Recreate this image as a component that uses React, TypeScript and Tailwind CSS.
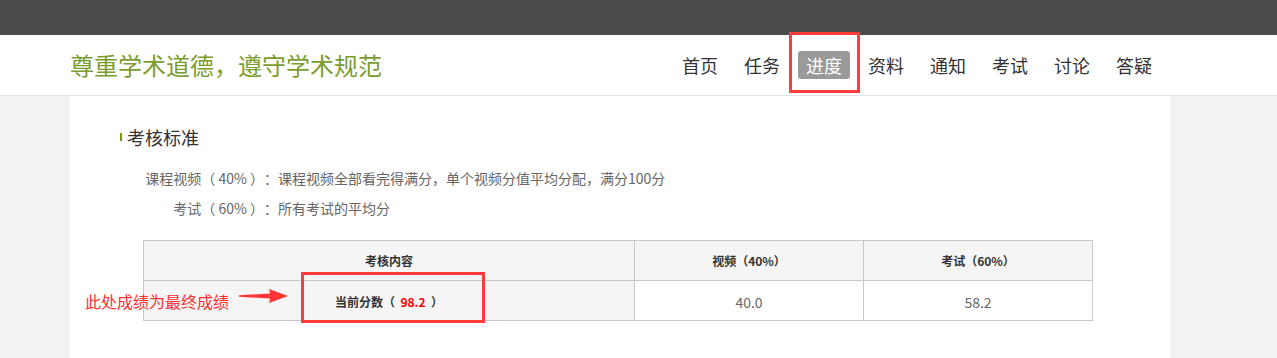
const nav = ["首页", "任务", "进度", "资料", "通知", "考试", "讨论", "答疑"];

const cjk = { fontFamily: '"Microsoft YaHei", "Noto Sans CJK SC", sans-serif' };

export default function App() {
  return (
    <div className="relative h-[358px] w-[1277px] overflow-hidden bg-[#f2f2f2]" style={cjk}>
      {/* top bar */}
      <div className="h-[35px] bg-[#4a4a4a]" />

      {/* header */}
      <div className="flex h-[61px] items-center justify-between border-b border-[#e2e2e2] bg-white">
        <div className="ml-[70px] flex w-[1100px] items-center justify-between">
          <h1 className="text-[24px] leading-[30px] text-[#7b9d2e]">尊重学术道德，遵守学术规范</h1>
          <nav className="mr-[10px] flex items-center gap-[10px]">
            {nav.map((n) => (
              <a
                key={n}
                className={
                  n === "进度"
                    ? "rounded-[3px] bg-[#9a9a9a] px-2 text-[18px] leading-[28px] text-white"
                    : "px-2 text-[18px] leading-[28px] text-[#333]"
                }
              >
                {n}
              </a>
            ))}
          </nav>
        </div>
      </div>

      {/* content panel */}
      <div className="ml-[70px] h-[262px] w-[1100px] bg-white pl-[50px] pt-[29px]">
        <div className="flex items-center">
          <span className="mr-[5px] h-[8px] w-[2px] bg-[#6f9a1e]" />
          <h2 className="text-[18px] leading-[24px] text-[#333]">考核标准</h2>
        </div>

        <div className="mt-[14px] pl-[23px] text-[14px] leading-[30px] text-[#666]">
          <div className="flex">
            <span className="w-[121px] whitespace-pre text-right">课程视频（ 40% ）</span>
            <span>：课程视频全部看完得满分，单个视频分值平均分配，满分100分</span>
          </div>
          <div className="flex">
            <span className="w-[121px] whitespace-pre text-right">考试（ 60% ）</span>
            <span>：所有考试的平均分</span>
          </div>
        </div>

        <table className="ml-[23px] mt-[17px] w-[950px] border-collapse text-center">
          <thead>
            <tr className="h-[40px] bg-[#f5f5f5] text-[12px] font-bold text-[#333]">
              <th className="w-[491px] border border-[#c8c8c8]">考核内容</th>
              <th className="w-[229px] border border-[#c8c8c8]">视频（40%）</th>
              <th className="border border-[#c8c8c8]">考试（60%）</th>
            </tr>
          </thead>
          <tbody>
            <tr className="h-[40px]">
              <td className="whitespace-pre border border-[#c8c8c8] bg-[#f5f5f5] pt-[3px] text-[12px] font-bold text-[#333]">
                当前分数（  <span className="text-[#ff0000]">98.2</span>  ）
              </td>
              <td className="border border-[#c8c8c8] pt-[3px] text-[14px] text-[#666]">40.0</td>
              <td className="border border-[#c8c8c8] pt-[3px] text-[14px] text-[#666]">58.2</td>
            </tr>
          </tbody>
        </table>
      </div>

      {/* annotations */}
      <div className="absolute left-[789px] top-[32px] h-[61px] w-[71px] border-[3px] border-[#ff3b3b]" />
      <div className="absolute left-[301px] top-[272px] h-[51px] w-[184px] border-[3px] border-[#ff3b3b]" />
      <span className="absolute left-[85px] top-[290px] text-[16px] leading-[22px] text-[#ff3030]">
        此处成绩为最终成绩
      </span>
      <svg className="absolute left-[239px] top-[288px]" width="49" height="16" viewBox="0 0 49 16">
        <polygon points="0,7.3 31,5.5 30,1 49,8 30,15 31,10.5 0,8.7" fill="#ff3333" />
      </svg>
    </div>
  );
}
